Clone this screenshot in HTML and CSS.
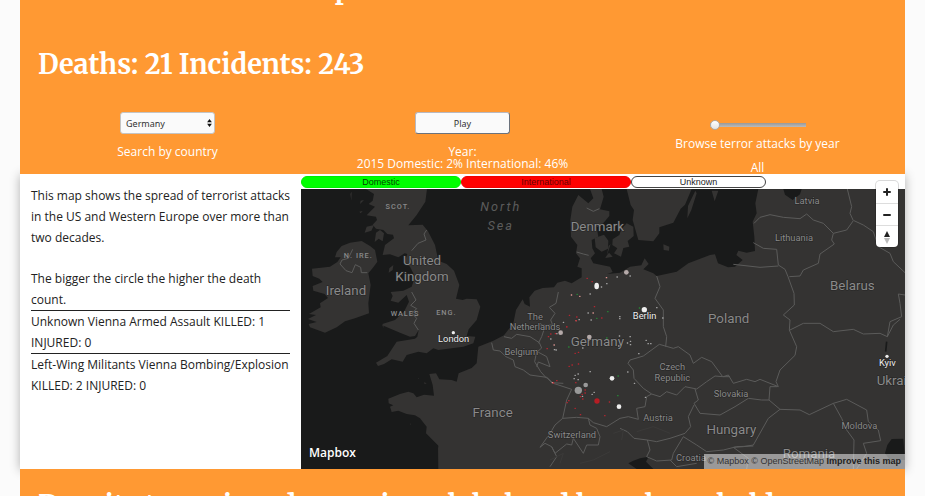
FILE: index.html
```html
<!DOCTYPE html>
<html lang="en">
<head>
<meta charset="utf-8">
<title>Terrorism across Europe</title>
<link rel="stylesheet" href="styles.css">
</head>
<body>
<main class="page">
  <header class="banner">
    <h1 class="headline headline-top">Terrorism across Europe</h1>
    <h2 class="headline">Deaths: 21 Incidents: 243</h2>
    <form class="controls">
      <div class="control">
        <div class="select-wrap">
          <select class="field" id="country"><option>Germany</option></select>
          <svg class="arrows" viewBox="0 0 6 10" aria-hidden="true"><path d="M3 0 6 4H0zM0 6h6L3 10z"/></svg>
        </div>
        <label for="country">Search by country</label>
      </div>
      <div class="control">
        <button class="field play" type="button">Play</button>
        <p>Year:<br>2015 Domestic: 2% International: 46%</p>
      </div>
      <div class="control control-range">
        <input class="range" id="year" type="range" min="0" max="20" value="0">
        <label for="year">Browse terror attacks by year</label>
        <output for="year">All</output>
      </div>
    </form>
  </header>

  <section class="content">
    <aside class="notes">
      <p>This map shows the spread of terrorist attacks in the US and Western Europe over more than two decades.</p>
      <p class="spaced">The bigger the circle the higher the death count.</p>
      <p class="incident">Unknown Vienna Armed Assault KILLED: 1 INJURED: 0</p>
      <p class="incident">Left-Wing Militants Vienna Bombing/Explosion KILLED: 2 INJURED: 0</p>
    </aside>
    <div class="map-panel">
      <div class="legend">
        <span class="key domestic">Domestic</span>
        <span class="key international">International</span>
        <span class="key unknown">Unknown</span>
      </div>
      <div class="map">
        <svg class="map-art" viewBox="3 57 1812 840" preserveAspectRatio="xMidYMid slice" role="img" aria-label="Map of Europe">
          <g class="land">
            <path d="M198 57 222 72 218 92 206 102 225 110 213 122 200 136 228 140 231 150 218 164 228 176 250 180 262 192 279 194 282 205 255 225 248 255 270 253 295 262 314 250 322 252 314 275 330 290 345 320 335 350 310 362 272 366 278 378 272 392 295 398 320 375 327 395 312 425 285 450 247 462 253 475 245 465 300 488 330 500 345 498 356 480 352 500 345 506 290 515 262 558 228 578 234 588 252 582 275 568 308 575 320 555 355 545 380 550 400 535 415 540 490 530 520 520 526 500 500 498 506 478 530 450 541 410 530 388 500 386 488 390 468 386 478 345 462 302 440 282 415 272 405 225 384 184 368 164 325 166 350 135 376 95 381 57z"/>
            <path d="M150 218 185 213 210 228 225 240 232 275 220 292 205 310 212 345 205 400 207 430 165 445 135 454 110 472 75 488 30 472 26 462 50 456 24 447 48 435 27 432 62 412 60 400 84 384 74 372 40 362 38 348 68 336 58 326 38 318 36 296 90 290 112 276 122 262 105 262 110 246 125 228z"/>
            <path d="M415 900 414 825 430 880 420 860 416 828 378 790 380 770 360 745 345 736 320 732 295 722 275 726 270 710 280 706 266 700 265 686 300 672 325 665 340 670 350 682 372 674 402 677 398 645 388 612 408 610 418 628 455 630 470 635 476 610 515 594 530 580 535 530 580 512 612 496 640 460 648 420 668 388 674 402 690 410 688 382 704 362 728 354 762 352 772 338 795 332 815 340 845 322 845 295 832 290 840 265 828 250 832 225 813 200 811 150 817 110 835 75 865 100 880 85 870 57 905 57 911 80 900 118 928 124 928 138 905 165 890 172 895 200 875 210 877 235 885 250 872 265 880 280 930 290 938 306 922 312 960 308 990 290 1024 286 1034 265 1046 282 1030 298 1060 310 1070 318 1130 305 1165 280 1230 255 1245 253 1254 280 1284 292 1305 290 1328 270 1309 255 1315 242 1340 248 1365 243 1363 200 1358 155 1370 130 1366 100 1375 57H1815V900z"/>
            <path d="M884 204 912 194 925 212 924 236 905 245 887 232zM938 208 958 195 964 178 980 160 1000 170 1001 198 983 213 988 230 970 234 963 260 942 250 952 235 937 225zM927 248 938 260 915 264zM926 228 932 222 920 258zM980 57 992 105 1002 120 998 150 1015 210 1060 214 1078 190 1078 172 1120 158 1142 116 1155 104 1175 57zM1186 62 1190 70 1174 120 1162 145 1164 108zM1090 223 1108 230 1107 242 1091 240zM1235 62 1255 62 1244 94z"/>
            <path d="M222 165 214 182 194 188 200 170zM240 180 252 190 248 214 236 206 224 216 228 188zM280 285 278 300 266 308 268 295zM155 65 154 92 151 72zM192 90 180 102 182 92zM178 125 188 123 182 130zM372 637 380 640 374 642zM355 624 358 626 355 627zM330 760 334 764 330 763z"/>
          </g>
          <g class="water">
            <path d="M1450 57 1455 74 1478 90 1500 73 1505 57zM985 880 1000 872 1020 865 1046 860 1038 875 1060 897 1010 897zM1810 806 1775 807 1762 825 1755 850 1770 870 1815 870z"/>
          </g>
          <g class="borders">
            <path d="M380 180 372 192 378 210 354 220 335 242M158 238 145 265 126 270 120 282 138 302 156 308 166 284 182 292 184 308 202 308M335 366 348 390 332 406 350 416 336 430 350 445 342 460 355 480M830 246 850 252 866 256M860 114 880 124 898 116"/>
            <path d="M775 366 768 400 748 412 765 430 752 450 758 465 720 466M612 500 635 505 650 493 690 500 718 518 725 534 712 545 740 560 750 590 715 576 710 590M720 460 735 470 725 500 715 520M575 518 580 540 600 543 618 560 640 570 645 590 670 600 690 615 740 622 760 640 815 658 800 690 788 745M710 545 704 575 722 605 740 625M740 622 755 638 790 640"/>
            <path d="M788 745 765 765 750 790 720 832 735 820 755 830 765 850 800 822 815 825 820 805 850 850 860 825 895 825 900 800 890 775 870 765 865 745 830 742 788 745M865 745 880 758 920 770 960 745 985 740 1015 748 1010 715 1035 710 1040 680 1055 672 1030 655 1002 625 1000 600 984 580 990 570 1030 558 1078 523 1120 535 1135 530 1170 555 1180 580 1205 562 1235 575 1268 620 1290 620"/>
            <path d="M1055 672 1080 680 1100 665 1130 675 1155 650 1190 657 1220 635 1245 618 1268 620M1185 657 1195 690 1182 700 1200 730 1260 735 1305 710 1345 685 1385 690 1407 690M1182 705 1165 740 1172 770 1155 790 1110 805 1070 815 1042 810 1002 805 982 785 960 775M1042 810 1050 840 1040 860 1070 873 1115 870 1120 850 1150 800 1190 825 1220 845 1270 840 1310 830 1360 828M755 830 770 860 750 890M1110 870 1130 890 1190 880"/>
            <path d="M1070 318 1080 350 1065 385 1090 420 1090 470 1100 500 1097 530M1270 620 1285 615 1300 640 1340 628 1365 635 1380 628 1435 650 1428 635 1440 600 1485 556 1490 530 1468 480 1470 450 1450 435 1483 405 1482 370 1464 320 1455 298 1435 285 1430 238 1390 235 1360 218"/>
            <path d="M1435 288 1380 292 1300 283M1362 160 1380 142 1410 134 1450 142 1500 146 1520 132 1540 150 1570 160 1600 190 1640 180 1660 152 1650 130 1655 110 1642 57M1600 190 1595 210 1603 222 1560 252 1555 280 1510 300 1500 318 1468 320M1662 152 1690 165 1720 185 1735 230 1770 250 1780 275 1815 308M1815 375 1795 372 1800 400 1805 440 1770 455 1762 500 1740 490 1690 492 1660 478 1600 485 1560 460 1510 460 1470 480M1762 500 1780 465 1800 448"/>
            <path d="M1407 690 1410 650 1432 650M1407 690 1440 718 1500 720 1528 734 1600 700 1640 688 1700 720 1705 755 1735 780 1742 812 1690 820 1700 850 1670 897M1600 700 1625 745 1640 780 1662 810 1660 897M1440 718 1405 745 1360 825 1330 830 1300 832 1345 865 1340 897"/>
            <path class="thin" d="M940 790 970 780 965 810M750 870 790 850 780 880M840 880 880 870 930 845M1010 785 1060 770 1110 790"/>
            <path class="river" d="M1760 515 1757 545"/>
          </g>
          <g class="labels">
            <text class="region" x="294" y="116">SCOT.</text>
            <text class="region" x="175" y="265">N. IRE.</text>
            <text class="region" x="315" y="439">WALES</text>
            <text class="region" x="439" y="435">ENG.</text>
            <text class="sea" x="602" y="122">North</text>
            <text class="sea" x="602" y="180">Sea</text>
            <text class="country" x="138" y="376">Ireland</text>
            <text class="country" x="366" y="285">United</text>
            <text class="country" x="366" y="332">Kingdom</text>
            <text class="country" x="892" y="182">Denmark</text>
            <text class="country" x="1286" y="459">Poland</text>
            <text class="country" x="1657" y="360">Belarus</text>
            <text class="country" x="578" y="742">France</text>
            <text class="country" x="892" y="527">Germany</text>
            <text class="country" x="1294" y="791">Hungary</text>
            <text class="country" x="1527" y="865">Romania</text>
            <text class="country" x="1797" y="646">Ukraine</text>
            <text class="small" x="1521" y="101">Latvia</text>
            <text class="small" x="1482" y="213">Lithuania</text>
            <text class="small" x="705" y="449">The</text>
            <text class="small" x="705" y="481">Netherlands</text>
            <text class="small" x="664" y="555">Belgium</text>
            <text class="small" x="1117" y="599">Czech</text>
            <text class="small" x="1117" y="632">Republic</text>
            <text class="small" x="1074" y="753">Austria</text>
            <text class="small" x="816" y="803">Switzerland</text>
            <text class="small" x="1293" y="682">Slovakia</text>
            <text class="small" x="1678" y="778">Moldova</text>
            <text class="small" x="1173" y="872">Croatia</text>
            <text class="city" x="461" y="517">London</text>
            <text class="city" x="1034" y="447">Berlin</text>
            <text class="city" x="1762" y="588">Kyiv</text>
          </g>
          <g class="dots">
            <circle cx="460" cy="488" r="5"/><circle cx="1761" cy="559" r="5"/>
            <circle cx="1033" cy="419" r="8"/><circle class="pale" cx="979" cy="307" r="7"/><ellipse cx="890" cy="348" rx="7" ry="10"/>
            <circle cx="936" cy="625" r="7"/><circle cx="957" cy="710" r="7"/>
            <circle class="grey" cx="835" cy="661" r="11"/><circle class="grey" cx="857" cy="645" r="7"/><circle class="pale" cx="782" cy="488" r="7"/><circle class="pale" cx="868" cy="501" r="7"/>
            <circle class="red" cx="891" cy="693" r="8"/>
            <path class="speck" d="M951 321h1M990 318h1M904 351h1M920 341h1M870 372h1M864 429h1M873 450h1M837 449h1M790 457h1M959 440h1M959 446h1M1070 413h1M1088 444h1M752 507h1M770 491h1M768 540h1M848 534h1M958 498h1M956 528h1M990 500h1M991 514h1M982 519h1M991 524h1M1038 511h1M1044 521h1M1052 521h1M1016 551h1M870 605h1M834 612h1M825 616h1M822 626h1M834 629h1M983 606h1M1003 640h1M1036 682h1M882 667h1M876 673h1M847 679h1M763 539h1"/>
            <path class="speck warm" d="M814 375h1M839 379h1M919 323h1M879 429h1M828 452h1M762 525h1M757 638h1"/>
            <path class="speck crimson" d="M861 325h1M876 335h1M883 410h1M808 436h1M830 441h1M905 444h1M800 470h1M828 452h1M745 500h1M752 492h1M766 491h1M741 536h1M800 471h1M825 550h1M835 547h1M835 582h1M816 585h1M807 589h1M827 638h1M770 632h1M760 639h1M855 660h1M855 669h1M846 673h1M841 680h1M848 687h1M928 696h1M801 698h1M806 692h1M825 715h1M841 734h1M914 737h1"/>
            <path class="speck green" d="M831 373h1M890 445h1M923 425h1M1018 414h1M920 504h1M954 618h1M953 677h1M806 531h1"/>
          </g>
        </svg>
        <a class="logo" href="#">Mapbox</a>
        <div class="attribution"><a href="#">© Mapbox</a> <a href="#">© OpenStreetMap</a> <a class="improve" href="#">Improve this map</a></div>
      </div>
      <div class="zoom">
        <button type="button" aria-label="Zoom in"><svg viewBox="0 0 22 22"><path class="sign" d="M8 11h6M11 8v6"/></svg></button>
        <button type="button" aria-label="Zoom out"><svg viewBox="0 0 22 22"><path class="sign" d="M8 11h6"/></svg></button>
        <button type="button" aria-label="Reset north"><svg viewBox="0 0 22 22"><path d="M11 5 14 11H8z"/><path class="south" d="M8 12h6l-3 6z"/></svg></button>
      </div>
    </div>
  </section>

  <section class="banner next">
    <h2 class="headline">Despite terrorism decreasing global and have been held</h2>
  </section>
</main>
</body>
</html>
```
FILE: styles.css
```css
* { box-sizing: border-box; }
html { background: #fbfbfb; }
body {
  margin: 0;
  padding: 0 20px;
  height: 100vh;
  overflow: hidden;
  font-family: "Open Sans", "Noto Sans", sans-serif;
  font-size: 12px;
  color: #222;
}
p, h1, h2 { margin: 0; }
.banner {
  position: relative;
  background: #ff9933;
  color: #fff;
  overflow: hidden;
}
.headline {
  padding: 0 18px;
  font: bold 27px/40px Merriweather, "DejaVu Serif Condensed", "DejaVu Serif", serif;
  white-space: nowrap;
}
.headline-top { margin-top: -32px; margin-bottom: 36px; }
.controls {
  display: grid;
  grid-template-columns: repeat(3, 1fr);
  margin-top: 28px;
  height: 62px;
  font-weight: 500;
}
.control {
  display: flex;
  flex-direction: column;
  align-items: center;
  gap: 12px;
  line-height: 12px;
  text-align: center;
}
.select-wrap { position: relative; display: flex; }
.field {
  width: 95px;
  height: 22px;
  padding: 0 5px;
  border: 1px solid #c4c4c4;
  border-radius: 3px;
  background: #fafafa;
  color: #333;
  font: 9px "Noto Sans", sans-serif;
  appearance: none;
}
.arrows { position: absolute; right: 3px; top: 7px; width: 5px; height: 8px; fill: #111; }
.play {
  border-color: #b8b8c0 #6b727c #6b727c #b8b8c0;
}
.control-range { gap: 12px; padding-top: 8px; }
.range {
  appearance: none;
  width: 96px;
  height: 10px;
  margin: 0;
  background: linear-gradient(#999, #bbb) center / 100% 4px no-repeat;
}
.range::-webkit-slider-thumb {
  appearance: none;
  width: 10px;
  height: 10px;
  border: 1px solid #b0aaa4;
  border-radius: 50%;
  background: linear-gradient(#fff, #e4e4e4);
}
.range + label { margin-top: -4px; }
.content {
  display: grid;
  grid-template-columns: 281px 1fr;
  background: #fff;
  box-shadow: 0 1px 10px rgba(0, 0, 0, .3);
}
.notes { padding: 11px 11px 0; line-height: 21px; color: #222; }
.spaced { margin-top: 20px; }
.incident { border-top: 1px solid #222; }
.map-panel { position: relative; }
.legend {
  display: flex;
  height: 15px;
  padding-top: 2px;
  font: 9px/10px "Liberation Sans", Arial, sans-serif;
  text-align: center;
}
.key { height: 12px; border: 1px solid; border-radius: 6px; }
.domestic { width: 160px; background: #0f0; border-color: #0e0; color: #040; }
.international { width: 170px; background: #f00; border-color: #e00; color: #600; }
.unknown { width: 135px; background: #fff; border-color: #444; color: #222; }
.map { position: relative; height: 280px; background: #191a1a; overflow: hidden; }
.map-art { display: block; width: 100%; height: 100%; }
.land { fill: #343332; }
.water { fill: #191a1a; }
.borders { fill: none; stroke: #5b5b5a; stroke-width: 3; stroke-linejoin: round; }
.borders .thin { stroke: #3b3a39; }
.borders .river { stroke: #191a1a; stroke-width: 5; }
.labels {
  font-family: Roboto, sans-serif;
  text-anchor: middle;
  fill: #8a8a8a;
  stroke: #242424;
  stroke-width: 3;
  paint-order: stroke;
}
.country { font-size: 40px; }
.small { font-size: 28px; }
.region { font-size: 22px; font-weight: 500; letter-spacing: 3px; stroke: none; }
.sea { font-size: 38px; font-style: italic; letter-spacing: 6px; fill: #5c5c5c; stroke: none; }
.city { font-size: 28px; fill: #eee; }
.dots { fill: #eee; }
.dots .pale { fill: #b5aaa9; }
.dots .grey { fill: #999; }
.dots .red { fill: #b51d24; }
.speck { stroke: #aaa; stroke-width: 4; stroke-linecap: round; }
.warm { stroke: #e59a95; }
.crimson { stroke: #b92530; }
.green { stroke: #268b35; }
.logo {
  position: absolute;
  left: 8px;
  bottom: 8px;
  font: 600 12px/16px "Open Sans", sans-serif;
  color: #fff;
  text-decoration: none;
}
.attribution {
  position: absolute;
  right: 0;
  bottom: 0;
  padding: 0 4px;
  background: rgba(255, 255, 255, .5);
  font: 9px/15px "Liberation Sans", Arial, sans-serif;
}
.attribution a { color: #333; text-decoration: none; }
.attribution .improve { font-weight: bold; color: #222; }
.zoom {
  position: absolute;
  top: 7px;
  right: 7px;
  width: 22px;
  border-radius: 4px;
  background: #fff;
  box-shadow: 0 0 0 1px rgba(0, 0, 0, .15);
  overflow: hidden;
}
.zoom button {
  display: block;
  width: 100%;
  height: 22px;
  padding: 0;
  border: 0;
  background: none;
}
.zoom button + button { border-top: 1px solid #ddd; }
.zoom svg { display: block; width: 22px; height: 22px; fill: #222; }
.sign { stroke: #222; stroke-width: 2; stroke-linecap: round; }
.zoom .south { fill: #bbb; }
.next { padding-top: 16px; }
```
